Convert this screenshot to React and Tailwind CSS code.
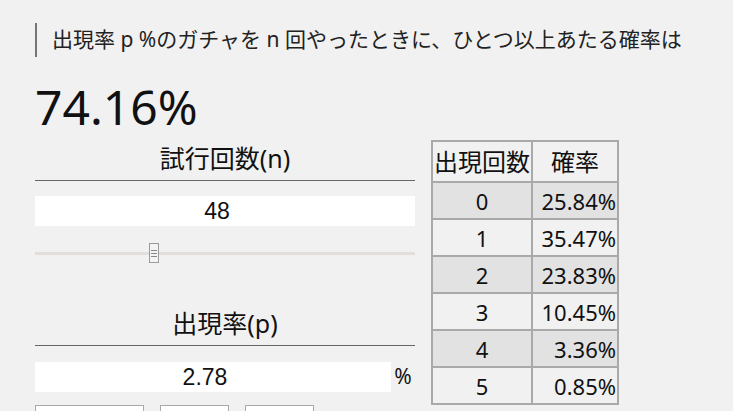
const rows = [
  { k: 0, p: '25.84%' },
  { k: 1, p: '35.47%' },
  { k: 2, p: '23.83%' },
  { k: 3, p: '10.45%' },
  { k: 4, p: '3.36%' },
  { k: 5, p: '0.85%' },
];

const font = { fontFamily: '"Noto Sans", "Noto Sans CJK JP", sans-serif' };
const inputFont = { fontFamily: '"Liberation Sans", Arial, sans-serif' };

const Slider = ({ value, min, max }) => {
  const pct = ((value - min) / (max - min)) * 100;
  return (
    <div className="relative h-[20px] w-full flex items-center">
      <div className="h-[3px] w-full bg-[#e3ded9]" />
      <div
        className="absolute top-0 w-[10px] h-[20px] bg-[#f3f3f3] border border-[#9a9a9a] flex flex-col items-center justify-center gap-[2px]"
        style={{ left: `${pct}%` }}
      >
        <div className="w-[6px] h-px bg-[#888]" />
        <div className="w-[6px] h-px bg-[#888]" />
        <div className="w-[6px] h-px bg-[#888]" />
      </div>
    </div>
  );
};

const Field = ({ label, value, suffix }) => (
  <div>
    <div className="h-[41px] flex items-center justify-center text-[25px] text-[#111] border-b border-[#666] leading-none pb-[3px]">
      {label}
    </div>
    <div className="mt-[15px] flex items-center">
      <div
        className="h-[30px] flex-1 bg-white flex items-center justify-center pr-[16px] text-[23px] text-[#111]"
        style={inputFont}
      >
        {value}
      </div>
      {suffix && <span className="w-[24px] text-center text-[21px] text-[#111]">{suffix}</span>}
    </div>
  </div>
);

export default function App() {
  return (
    <div
      className="h-screen w-full bg-[#f1f1f1] text-[#111] overflow-hidden pl-[35px] pt-[23px]"
      style={font}
    >
      <div className="border-l-2 border-[#777] pl-[15px] h-[34px] flex items-center text-[21px] text-[#222] whitespace-nowrap">
        出現率 p %のガチャを n 回やったときに、ひとつ以上あたる確率は
      </div>

      <div className="mt-[26px] text-[48px] leading-none">74.16%</div>

      <div className="flex mt-[9px]">
        <div className="w-[380px] shrink-0">
          <Field label="試行回数(n)" value="48" />
          <div className="mt-[17px]">
            <Slider value={30} min={0} max={100} />
          </div>
          <div className="mt-[42px]">
            <Field label="出現率(p)" value="2.78" suffix="%" />
          </div>
          <div className="mt-[12px] flex gap-[16px]">
            <div className="w-[109px] h-[30px] bg-white border border-[#a9a9a9]" />
            <div className="w-[69px] h-[30px] bg-white border border-[#a9a9a9]" />
            <div className="w-[69px] h-[30px] bg-white border border-[#a9a9a9]" />
          </div>
        </div>

        <table className="ml-[16px] border-collapse border-2 border-[#a9a9a9] self-start text-[22px] leading-none">
          <thead>
            <tr className="h-[41px]">
              <th className="w-[100px] border-2 border-[#a9a9a9] font-normal px-0 text-[24px]">出現回数</th>
              <th className="w-[86px] border-2 border-[#a9a9a9] font-normal text-[24px]">確率</th>
            </tr>
          </thead>
          <tbody>
            {rows.map((r, i) => (
              <tr key={r.k} className={`h-[37px] ${i % 2 === 0 ? 'bg-[#e2e2e2]' : 'bg-[#f1f1f1]'}`}>
                <td className="border-2 border-[#a9a9a9] text-center">{r.k}</td>
                <td className="border-2 border-[#a9a9a9] text-right pr-[1px]">{r.p}</td>
              </tr>
            ))}
          </tbody>
        </table>
      </div>
    </div>
  );
}
